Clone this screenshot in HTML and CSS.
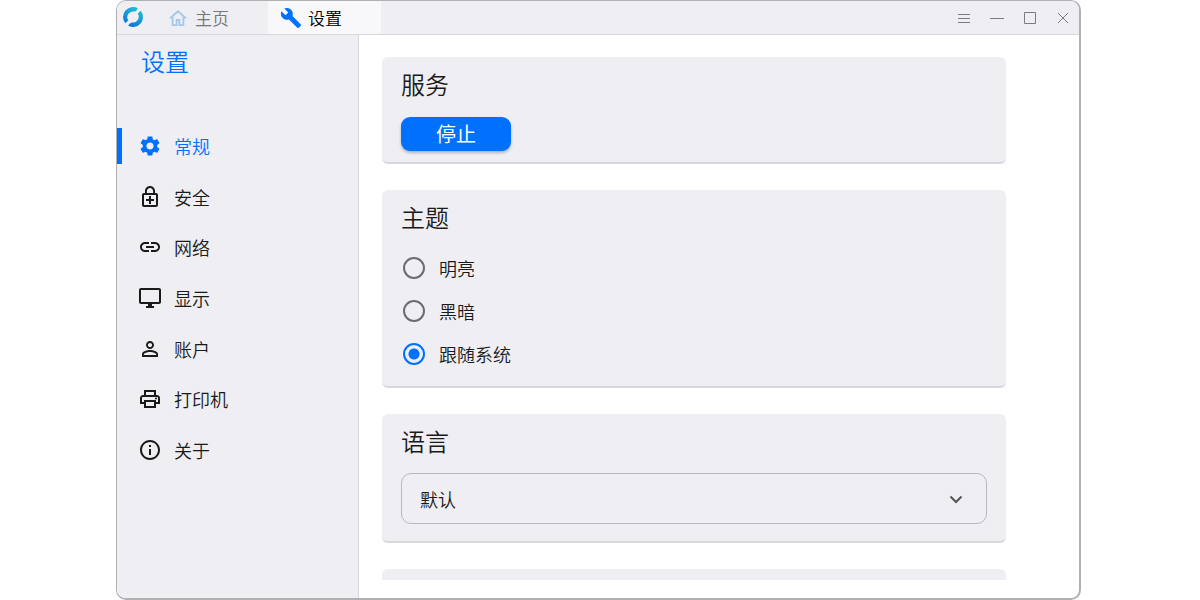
FILE: index.html
```html
<!DOCTYPE html>
<html lang="zh-CN">
<head>
    <meta charset="UTF-8">
    <meta name="viewport" content="width=device-width, initial-scale=1.0">
    <title>设置</title>
    <link rel="stylesheet" href="styles.css">
</head>
<body>

    <div class="window">
        <header class="titlebar">
            <svg class="logo" viewBox="0 0 20 20" fill="none">
                <defs>
                    <linearGradient id="ring" gradientUnits="userSpaceOnUse" x1="15" y1="1" x2="5" y2="19">
                        <stop offset="0" stop-color="#1fc0d0"/>
                        <stop offset="1" stop-color="#1070e0"/>
                    </linearGradient>
                </defs>
                <path fill="url(#ring)" d="M14.800 1.200A10 10 0 0 0 2.200 16.200L5.300 13.400A5.700 5.700 0 0 1 11.200 4.600Q14 4 14.800 1.200Z"/>
                <path fill="url(#ring)" d="M5.200 18.800A10 10 0 0 0 17.800 3.800L14.700 6.600A5.700 5.700 0 0 1 8.800 15.400Q6 16 5.200 18.800Z"/>
            </svg>
            <nav class="tabs">
                <a class="tab" href="#home">
                    <svg class="home-icon" viewBox="0 0 20 20" fill="none" stroke="#a3c8ea" stroke-width="2"><path d="M1 10.500 10 2.500l9 8M4 8.500V18h4.500V12h3v6H16V8.500"/></svg>
                    主页
                </a>
                <a class="tab active" href="#settings">
                    <svg viewBox="0 0 24 24" fill="#0071ff"><path d="M22.700 19l-9.100-9.100c.9-2.300.4-5-1.500-6.900-2-2-5-2.400-7.400-1.300L9 6 6 9 1.600 4.700C.4 7.100.9 10.100 2.900 12.100c1.900 1.900 4.600 2.400 6.900 1.500l9.100 9.100c.4.4 1 .4 1.400 0l2.300-2.300c.5-.4.5-1.100.1-1.400z"/></svg>
                    设置
                </a>
            </nav>
            <div class="controls">
                <button type="button" aria-label="菜单"><svg viewBox="0 0 14 14"><path d="M1 3.500h12M1 7.500h12M1 11.500h12"/></svg></button>
                <button type="button" aria-label="最小化"><svg viewBox="0 0 14 14"><path d="M0 7.500h14"/></svg></button>
                <button type="button" aria-label="最大化"><svg viewBox="0 0 14 14"><path d="M1.500 1.500h11v11h-11z"/></svg></button>
                <button type="button" aria-label="关闭"><svg viewBox="0 0 14 14"><path d="M2 2l10 10M12 2L2 12"/></svg></button>
            </div>
        </header>

        <div class="main">
            <aside class="sidebar">
                <h1>设置</h1>
                <nav class="menu">
                    <a class="item active" href="#general">
                        <svg viewBox="0 0 24 24"><path d="M19.140 12.940c.04-.3.06-.61.06-.94 0-.32-.02-.64-.07-.94l2.030-1.580c.18-.14.23-.41.12-.61l-1.920-3.320c-.12-.22-.37-.29-.59-.22l-2.390.96c-.5-.38-1.030-.7-1.620-.94l-.36-2.540c-.04-.24-.24-.41-.48-.41h-3.840c-.24 0-.43.17-.47.41l-.36 2.540c-.59.24-1.130.57-1.620.94l-2.390-.96c-.22-.08-.47 0-.59.22L2.740 8.870c-.12.21-.08.47.12.61l2.030 1.580c-.05.3-.09.63-.09.94s.02.64.07.94l-2.030 1.580c-.18.14-.23.41-.12.61l1.920 3.320c.12.22.37.29.59.22l2.390-.96c.5.38 1.030.7 1.620.94l.36 2.540c.05.24.24.41.48.41h3.840c.24 0 .44-.17.47-.41l.36-2.540c.59-.24 1.130-.56 1.620-.94l2.390.96c.22.08.47 0 .59-.22l1.920-3.320c.12-.22.07-.47-.12-.61l-2.010-1.580zM12 15.600c-1.980 0-3.600-1.620-3.600-3.600s1.620-3.600 3.600-3.600 3.600 1.620 3.600 3.600-1.620 3.600-3.600 3.600z"/></svg>
                        常规
                    </a>
                    <a class="item" href="#security">
                        <svg viewBox="0 0 24 24"><path d="M18 8h-1V6c0-2.760-2.240-5-5-5S7 3.240 7 6v2H6c-1.100 0-2 .9-2 2v10c0 1.100.9 2 2 2h12c1.100 0 2-.9 2-2V10c0-1.100-.9-2-2-2zM8.900 6c0-1.710 1.390-3.100 3.100-3.100s3.100 1.390 3.100 3.100v2H8.900V6zM18 20H6V10h12v10zm-7-1h2v-3h3v-2h-3v-3h-2v3H8v2h3z"/></svg>
                        安全
                    </a>
                    <a class="item" href="#network">
                        <svg viewBox="0 0 24 24"><path d="M3.900 12c0-1.710 1.390-3.100 3.100-3.100h4V7H7c-2.760 0-5 2.240-5 5s2.240 5 5 5h4v-1.900H7c-1.710 0-3.100-1.390-3.100-3.100zM8 13h8v-2H8v2zm9-6h-4v1.900h4c1.710 0 3.100 1.390 3.100 3.100s-1.390 3.100-3.100 3.100h-4V17h4c2.760 0 5-2.240 5-5s-2.240-5-5-5z"/></svg>
                        网络
                    </a>
                    <a class="item" href="#display">
                        <svg viewBox="0 0 24 24"><path d="M21 2H3c-1.100 0-2 .9-2 2v12c0 1.100.9 2 2 2h7v2H8v2h8v-2h-2v-2h7c1.100 0 2-.9 2-2V4c0-1.100-.9-2-2-2zm0 14H3V4h18v12z"/></svg>
                        显示
                    </a>
                    <a class="item" href="#account">
                        <svg viewBox="0 0 24 24"><path d="M12 5.900c1.160 0 2.100.94 2.100 2.100s-.94 2.100-2.100 2.100S9.900 9.160 9.900 8s.94-2.100 2.100-2.100m0 9c2.970 0 6.100 1.460 6.100 2.100v1.100H5.900V17c0-.64 3.130-2.100 6.100-2.100M12 4C9.790 4 8 5.790 8 8s1.790 4 4 4 4-1.790 4-4-1.790-4-4-4zm0 9c-2.670 0-8 1.340-8 4v3h16v-3c0-2.660-5.330-4-8-4z"/></svg>
                        账户
                    </a>
                    <a class="item" href="#printer">
                        <svg viewBox="0 0 24 24"><path d="M19 8h-1V3H6v5H5c-1.660 0-3 1.340-3 3v6h4v4h12v-4h4v-6c0-1.660-1.340-3-3-3zM8 5h8v3H8V5zm8 12v2H8v-4h8v2zm2-2v-2H6v2H4v-4c0-.55.45-1 1-1h14c.55 0 1 .45 1 1v4h-2z"/><circle cx="18" cy="11.500" r="1"/></svg>
                        打印机
                    </a>
                    <a class="item" href="#about">
                        <svg viewBox="0 0 24 24"><path d="M11 7h2v2h-2zm0 4h2v6h-2zm1-9C6.480 2 2 6.480 2 12s4.480 10 10 10 10-4.480 10-10S17.520 2 12 2zm0 18c-4.410 0-8-3.590-8-8s3.590-8 8-8 8 3.590 8 8-3.590 8-8 8z"/></svg>
                        关于
                    </a>
                </nav>
            </aside>

            <main class="content">
                <section class="card">
                    <h2>服务</h2>
                    <button class="stop" type="button">停止</button>
                </section>

                <section class="card">
                    <h2>主题</h2>
                    <div class="radios">
                        <label><input type="radio" name="theme" value="light">明亮</label>
                        <label><input type="radio" name="theme" value="dark">黑暗</label>
                        <label><input type="radio" name="theme" value="system" checked>跟随系统</label>
                    </div>
                </section>

                <section class="card">
                    <h2><label for="language">语言</label></h2>
                    <div class="select-box">
                        <select id="language">
                            <option>默认</option>
                        </select>
                        <svg viewBox="0 0 24 24"><path d="M6.500 9.500l5.500 5.500 5.500-5.500"/></svg>
                    </div>
                </section>

                <section class="card"></section>
            </main>
        </div>
    </div>

</body>
</html>
```
FILE: styles.css
```css
* {
    box-sizing: border-box;
}

body {
    margin: 0;
    padding: 0 119px 0 116px;
    background-color: #fff;
    font-family: "Noto Sans CJK SC", sans-serif;
    font-weight: 350;
    font-size: 18px;
    line-height: 24px;
    color: #1a1a1a;
}

a {
    color: inherit;
    text-decoration: none;
}

h1, h2 {
    margin: 0;
    font-size: 24px;
    line-height: 32px;
    font-weight: 350;
}

.window {
    display: flex;
    flex-direction: column;
    height: 100vh;
    border: 2px solid #b0b0b2;
    border-left-width: 1px;
    border-top-width: 1px;
    border-radius: 10px;
    background-color: #fff;
    overflow: hidden;
}

.titlebar {
    display: flex;
    align-items: stretch;
    height: 34px;
    background-color: #eeeef3;
    border-bottom: 1px solid #d8d8dc;
}

.logo {
    width: 20px;
    height: 20px;
    margin: 6px 12px 0 6px;
}

.tabs {
    display: flex;
    flex: 1;
}

.tab {
    display: flex;
    align-items: center;
    gap: 6px;
    width: 113px;
    padding-left: 12px;
    font-size: 17px;
    color: #777;
}

.tab svg {
    width: 22px;
    height: 22px;
}

.tab .home-icon {
    width: 18px;
    height: 18px;
    margin: 0 2px;
}

.tab.active {
    background-color: #f8f8fa;
    color: #000;
}

.controls {
    display: flex;
    align-items: center;
}

.controls button {
    display: flex;
    align-items: center;
    justify-content: center;
    width: 33px;
    height: 33px;
    padding: 0;
    border: none;
    background: none;
}

.controls svg {
    width: 14px;
    height: 14px;
    fill: none;
    stroke: #7b7b80;
}

.main {
    display: flex;
    flex: 1;
    min-height: 0;
}

.sidebar {
    width: 242px;
    background-color: #eeeef3;
    border-right: 1px solid #d8d8dc;
}

.sidebar h1 {
    padding: 10px 0 0 24px;
    color: #0071ff;
}

.menu {
    display: grid;
    grid-auto-rows: 1fr;
    height: 354px;
    margin-top: 44px;
}

.item {
    display: flex;
    align-items: center;
    gap: 12px;
    padding-left: 21px;
}

.item svg {
    width: 24px;
    height: 24px;
    fill: #1a1a1a;
}

.item.active {
    padding-left: 0;
    color: #0071ff;
}

.item.active::before {
    content: "";
    width: 5px;
    height: 36px;
    background-color: #0071ff;
}

.item.active svg {
    margin-left: 4px;
    fill: #0071ff;
}

.content {
    display: flex;
    flex-direction: column;
    flex: 1;
    gap: 26px;
    margin: 22px 73px 18px 23px;
    overflow: hidden;
}

.card {
    flex-shrink: 0;
    min-height: 60px;
    padding: 11px 19px 11px;
    background-color: #eeeef3;
    border-bottom: 2px solid #d8d8dc;
    border-radius: 6px;
}

.stop {
    display: block;
    width: 110px;
    height: 34px;
    margin-top: 17px;
    padding: 0;
    border: none;
    border-radius: 9px;
    background-color: #0071ff;
    box-shadow: 0 2px 3px rgba(0, 0, 0, 0.25);
    font-family: inherit;
    font-size: 20px;
    line-height: 32px;
    color: #fff;
}

.radios {
    margin-top: 13px;
}

.radios label {
    display: flex;
    align-items: center;
    gap: 14px;
    height: 43px;
}

.radios input {
    appearance: none;
    width: 22px;
    height: 22px;
    margin: 0 0 0 2px;
    border: 2px solid #6c6c70;
    border-radius: 50%;
}

.radios input:checked {
    border-color: #0071ff;
    background: radial-gradient(circle, #0071ff 5px, transparent 6px);
}

.select-box {
    display: grid;
    align-items: center;
    margin: 16px 0 6px;
}

.select-box select {
    grid-area: 1 / 1;
    appearance: none;
    width: 100%;
    height: 51px;
    padding: 0 18px;
    border: 1px solid #b8b8bc;
    border-radius: 10px;
    background: none;
    font: inherit;
    color: inherit;
}

.select-box svg {
    grid-area: 1 / 1;
    justify-self: end;
    width: 24px;
    height: 24px;
    margin-right: 19px;
    fill: none;
    stroke: #555;
    stroke-width: 2;
    pointer-events: none;
}
```
